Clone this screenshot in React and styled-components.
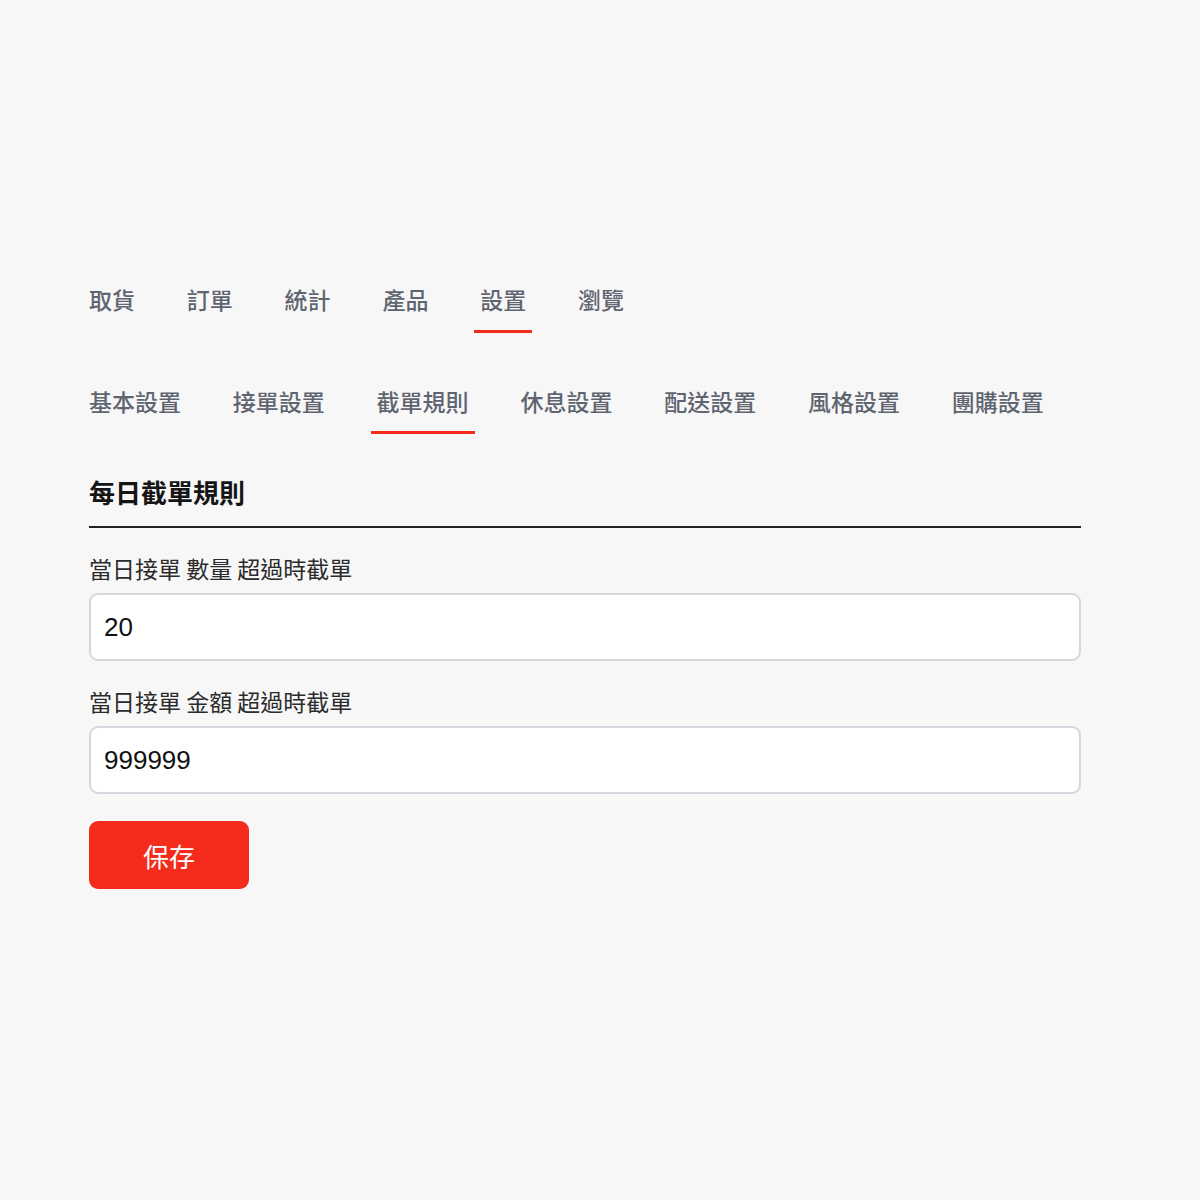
import React, { useState } from 'react'
import styled, { createGlobalStyle } from 'styled-components'

const GlobalStyle = createGlobalStyle`
  html, body {
    margin: 0;
    background: #f7f7f7;
  }
  body {
    font-family: "Liberation Sans", "Noto Sans CJK TC", sans-serif;
  }
`

const mainTabs = ['取貨', '訂單', '統計', '產品', '設置', '瀏覽']
const subTabs = ['基本設置', '接單設置', '截單規則', '休息設置', '配送設置', '風格設置', '團購設置']

export default function App() {
  const [tab, setTab] = useState('設置')
  const [sub, setSub] = useState('截單規則')
  const [count, setCount] = useState('20')
  const [amount, setAmount] = useState('999999')

  return (
    <Page>
      <GlobalStyle />
      <Content>
        <TabBar>
          {mainTabs.map((t) => (
            <Tab key={t} $active={t === tab} onClick={() => setTab(t)}>
              {t}
            </Tab>
          ))}
        </TabBar>

        <TabBar $sub>
          {subTabs.map((t) => (
            <Tab key={t} $sub $active={t === sub} onClick={() => setSub(t)}>
              {t}
            </Tab>
          ))}
        </TabBar>

        <Heading>每日截單規則</Heading>

        <Field>
          <Label>當日接單 數量 超過時截單</Label>
          <Input value={count} onChange={(e) => setCount(e.target.value)} />
        </Field>

        <Field>
          <Label>當日接單 金額 超過時截單</Label>
          <Input value={amount} onChange={(e) => setAmount(e.target.value)} />
        </Field>

        <SaveButton>保存</SaveButton>
      </Content>
    </Page>
  )
}

const Page = styled.div`
  min-height: 1200px;
  padding: 284px 0 0 89px;
  box-sizing: border-box;
`

const Content = styled.div`
  width: 992px;
  display: flex;
  flex-direction: column;
`

const TabBar = styled.div`
  display: flex;
  gap: 39.8px;
  margin-left: -6px;
  margin-top: ${(p) => (p.$sub ? '53px' : '0')};
`

const Tab = styled.div`
  font-family: "Noto Sans CJK TC", sans-serif;
  font-size: 23px;
  font-weight: 500;
  line-height: 30px;
  color: #5f6570;
  padding: 0 6px ${(p) => (p.$sub ? '15px' : '16px')};
  border-bottom: 3px solid ${(p) => (p.$active ? '#f52c1c' : 'transparent')};
  cursor: pointer;
  white-space: nowrap;
`

const Heading = styled.h2`
  margin: 40px 0 0;
  font-family: "Noto Sans CJK TC", sans-serif;
  font-size: 26px;
  font-weight: 600;
  line-height: 36px;
  color: #151515;
  padding-bottom: 16px;
  border-bottom: 2px solid #222;
`

const Field = styled.div`
  display: flex;
  flex-direction: column;
  gap: 10px;
  margin-top: 25px;
`

const Label = styled.label`
  font-family: "Noto Sans CJK TC", sans-serif;
  font-size: 23px;
  line-height: 30px;
  color: #2b2b2b;
`

const Input = styled.input`
  box-sizing: border-box;
  width: 100%;
  height: 68px;
  padding: 0 13px;
  border: 2px solid #d4d7dd;
  border-radius: 9px;
  background: #fff;
  font-family: "Liberation Sans", Arial, sans-serif;
  font-size: 26px;
  color: #111;
  outline: none;
`

const SaveButton = styled.button`
  align-self: flex-start;
  margin-top: 27px;
  width: 160px;
  height: 68px;
  border: none;
  border-radius: 9px;
  background: #f52c1c;
  color: #fff;
  font-family: "Noto Sans CJK TC", sans-serif;
  font-size: 26px;
  cursor: pointer;
`
